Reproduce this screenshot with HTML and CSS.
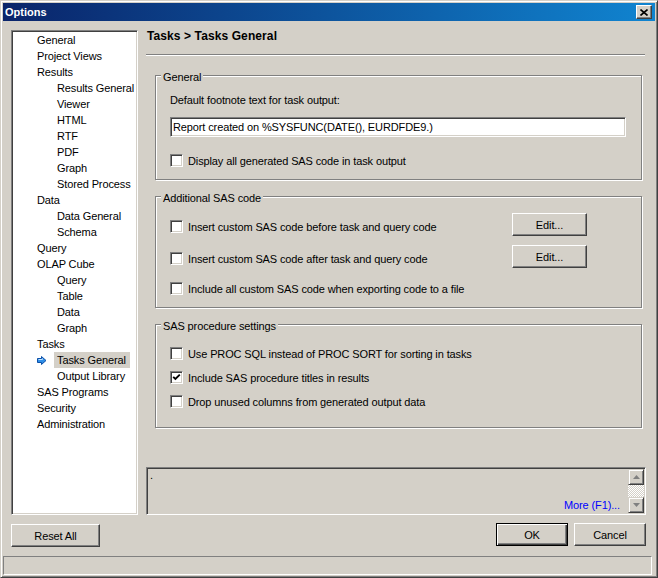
FILE: index.html
```html
<!DOCTYPE html>
<html>
<head>
<meta charset="utf-8">
<title>Options</title>
<link rel="stylesheet" href="styles.css">
</head>
<body>
<div class="window">
  <div class="titlebar">
    <span class="title">Options</span>
    <span class="close"><svg width="8" height="7" viewBox="0 0 8 7"><path d="M0.5 0.5 L7.5 6.5 M7.5 0.5 L0.5 6.5" stroke="#000" stroke-width="1.6"/></svg></span>
  </div>
  <div class="client">
    <div class="main">
      <div class="tree">
        <div class="node"><span>General</span></div>
        <div class="node"><span>Project Views</span></div>
        <div class="node"><span>Results</span></div>
        <div class="node sub"><span>Results General</span></div>
        <div class="node sub"><span>Viewer</span></div>
        <div class="node sub"><span>HTML</span></div>
        <div class="node sub"><span>RTF</span></div>
        <div class="node sub"><span>PDF</span></div>
        <div class="node sub"><span>Graph</span></div>
        <div class="node sub"><span>Stored Process</span></div>
        <div class="node"><span>Data</span></div>
        <div class="node sub"><span>Data General</span></div>
        <div class="node sub"><span>Schema</span></div>
        <div class="node"><span>Query</span></div>
        <div class="node"><span>OLAP Cube</span></div>
        <div class="node sub"><span>Query</span></div>
        <div class="node sub"><span>Table</span></div>
        <div class="node sub"><span>Data</span></div>
        <div class="node sub"><span>Graph</span></div>
        <div class="node"><span>Tasks</span></div>
        <div class="node sel"><svg class="arrow" width="10" height="9" viewBox="0 0 10 9"><path d="M0.5 2.5 H4.5 V0.5 L9 4.5 L4.5 8.5 V6.5 H0.5 Z" fill="#2f8fe8" stroke="#0b4fa8" stroke-width="1"/><path d="M1.5 3.5 H5.5 V2.5" fill="none" stroke="#bfe2ff" stroke-width="1"/></svg><span>Tasks General</span></div>
        <div class="node sub"><span>Output Library</span></div>
        <div class="node"><span>SAS Programs</span></div>
        <div class="node"><span>Security</span></div>
        <div class="node"><span>Administration</span></div>
      </div>
      <div class="pane">
        <div class="crumb">Tasks &gt; Tasks General</div>
        <div class="sep"></div>

        <div class="group g1">
          <div class="legend">General</div>
          <div class="field-label">Default footnote text for task output:</div>
          <div class="textbox">Report created on %SYSFUNC(DATE(), EURDFDE9.)</div>
          <div class="row first">
            <div class="check"><span class="box"></span><span>Display all generated SAS code in task output</span></div>
          </div>
        </div>

        <div class="group g2">
          <div class="legend">Additional SAS code</div>
          <div class="row first">
            <div class="check shift"><span class="box"></span><span>Insert custom SAS code before task and query code</span></div>
            <div class="btn edit">Edit...</div>
          </div>
          <div class="row">
            <div class="check shift"><span class="box"></span><span>Insert custom SAS code after task and query code</span></div>
            <div class="btn edit">Edit...</div>
          </div>
          <div class="row">
            <div class="check"><span class="box"></span><span>Include all custom SAS code when exporting code to a file</span></div>
          </div>
        </div>

        <div class="group g3">
          <div class="legend">SAS procedure settings</div>
          <div class="row first">
            <div class="check"><span class="box"></span><span>Use PROC SQL instead of PROC SORT for sorting in tasks</span></div>
          </div>
          <div class="row">
            <div class="check"><span class="box checked"><svg width="9" height="9" viewBox="0 0 9 9"><path d="M1.2 3.8 L3.4 6 L7.8 1.6" fill="none" stroke="#000" stroke-width="1.9"/></svg></span><span>Include SAS procedure titles in results</span></div>
          </div>
          <div class="row">
            <div class="check"><span class="box"></span><span>Drop unused columns from generated output data</span></div>
          </div>
        </div>

        <div class="help">
          <div class="help-text">
            <div class="dot">.</div>
            <div class="more">More (F1)...</div>
          </div>
          <div class="scrollbar">
            <div class="sbtn"><svg width="7" height="4" viewBox="0 0 7 4"><path d="M3.5 0 L7 4 H0 Z" fill="#808080"/></svg></div>
            <div class="track"></div>
            <div class="sbtn"><svg width="7" height="4" viewBox="0 0 7 4"><path d="M0 0 H7 L3.5 4 Z" fill="#808080"/></svg></div>
          </div>
        </div>
      </div>
    </div>
    <div class="buttons">
      <div class="btn reset">Reset All</div>
      <div class="btn ok">OK</div>
      <div class="btn cancel">Cancel</div>
    </div>
    <div class="status"></div>
  </div>
</div>
</body>
</html>
```

FILE: styles.css
```css
html, body {
  margin: 0;
  padding: 0;
  background: #d4d0c8;
}
body {
  font-family: "Liberation Sans", Arial, sans-serif;
  font-size: 11px;
  letter-spacing: -0.12px;
  color: #000;
}
.window {
  width: 658px;
  height: 578px;
  box-sizing: border-box;
  border: 1px solid;
  border-color: #d4d0c8 #404040 #404040 #d4d0c8;
  box-shadow: inset 1px 1px 0 #fff, inset -1px -1px 0 #808080;
  padding: 2px;
  background: #d4d0c8;
  display: flex;
  flex-direction: column;
}
.titlebar {
  height: 18px;
  flex: none;
  display: flex;
  align-items: center;
  padding-left: 2px;
  padding-right: 3px;
  background: linear-gradient(to right, #0a246a, #1084d0);
}
.title {
  color: #fff;
  font-weight: bold;
  font-size: 11px;
  letter-spacing: 0;
  flex: 1;
}
.close {
  width: 16px;
  height: 14px;
  box-sizing: border-box;
  border: 1px solid;
  border-color: #fff #404040 #404040 #fff;
  box-shadow: inset -1px -1px 0 #808080;
  background: #d4d0c8;
  display: flex;
  align-items: center;
  justify-content: center;
}
.close svg { display: block; }

.client {
  flex: 1;
  display: flex;
  flex-direction: column;
}
.main {
  display: flex;
  padding: 9px 9px 0 8px;
}
.tree {
  width: 127px;
  height: 485px;
  box-sizing: border-box;
  background: #fff;
  border: 1px solid;
  border-color: #808080 #fff #fff #808080;
  box-shadow: inset 1px 1px 0 #404040, inset -1px -1px 0 #d4d0c8;
  padding: 1px 0 0 22px;
}
.node {
  height: 16px;
  line-height: 16px;
  display: flex;
  align-items: center;
  white-space: nowrap;
}
.node span {
  padding: 0 3px;
}
.node.sub {
  padding-left: 20px;
}
.node.sel {
  margin-left: 3px;
}
.node.sel .arrow {
  display: block;
  margin-right: 7px;
}
.node.sel span {
  background: #d4d0c8;
  padding-right: 4px;
}

.pane {
  width: 500px;
  margin-left: 8px;
  height: 485px;
  display: flex;
  flex-direction: column;
}
.crumb {
  height: 24px;
  line-height: 13px;
  font-weight: bold;
  font-size: 12px;
  letter-spacing: 0.1px;
  padding-left: 1px;
  flex: none;
}
.sep {
  height: 0;
  border-top: 1px solid #808080;
  border-bottom: 1px solid #fff;
  margin-right: 1px;
  flex: none;
}
.group {
  flex: none;
  box-sizing: border-box;
  margin: 16px 4px 0 9px;
  border: 1px solid #808080;
  box-shadow: inset 1px 1px 0 #fff, 1px 1px 0 #fff;
  padding: 0 0 0 14px;
}
.g1 { margin-top: 19px; height: 105px; }
.g2 { height: 112px; }
.g3 { height: 104px; }
.legend {
  display: table;
  margin: -6px 0 0 -9px;
  padding: 0 2px;
  line-height: 14px;
  background: #d4d0c8;
}
.field-label {
  margin-top: 9px;
  line-height: 14px;
}
.textbox {
  margin-top: 10px;
  width: 456px;
  height: 20px;
  box-sizing: border-box;
  background: #fff;
  border: 1px solid;
  border-color: #808080 #fff #fff #808080;
  box-shadow: inset 1px 1px 0 #404040, inset -1px -1px 0 #d4d0c8;
  padding: 1px 2px;
  line-height: 16px;
  white-space: nowrap;
}
.row {
  height: 23px;
  display: flex;
  align-items: center;
}
.g1 .row.first { margin-top: 12px; }
.g2 .row { margin-top: 9px; }
.g2 .row.first { margin-top: 8px; }
.g3 .row { margin-top: 1px; }
.g3 .row.first { margin-top: 9px; }
.check {
  display: flex;
  align-items: center;
  line-height: 14px;
  white-space: nowrap;
}
.check.shift { margin-top: 4px; }
.box {
  width: 13px;
  height: 13px;
  box-sizing: border-box;
  background: #fff;
  border: 1px solid;
  border-color: #808080 #fff #fff #808080;
  box-shadow: inset 1px 1px 0 #404040, inset -1px -1px 0 #d4d0c8;
  margin-right: 5px;
  flex: none;
  padding: 1px;
}
.box svg { display: block; }

.btn {
  box-sizing: border-box;
  height: 23px;
  border: 1px solid;
  border-color: #fff #404040 #404040 #fff;
  box-shadow: inset -1px -1px 0 #808080;
  background: #d4d0c8;
  display: flex;
  align-items: center;
  justify-content: center;
  flex: none;
}
.edit {
  width: 75px;
  margin-left: auto;
  margin-right: 54px;
}

.help {
  margin-top: auto;
  height: 48px;
  box-sizing: border-box;
  border: 1px solid;
  border-color: #808080 #fff #fff #808080;
  box-shadow: inset 1px 1px 0 #404040, inset -1px -1px 0 #d4d0c8;
  padding: 1px;
  display: flex;
  flex: none;
}
.help-text {
  flex: 1;
  display: flex;
  flex-direction: column;
  justify-content: space-between;
  padding-left: 2px;
}
.dot { line-height: 13px; }
.more {
  color: #0000ff;
  align-self: flex-end;
  line-height: 13px;
  margin-right: 8px;
  margin-bottom: 1px;
}
.scrollbar {
  width: 16px;
  display: flex;
  flex-direction: column;
}
.sbtn {
  height: 16px;
  box-sizing: border-box;
  border: 1px solid;
  border-color: #d4d0c8 #404040 #404040 #d4d0c8;
  box-shadow: inset 1px 1px 0 #fff, inset -1px -1px 0 #808080;
  background: #d4d0c8;
  display: flex;
  align-items: center;
  justify-content: center;
  flex: none;
}
.sbtn svg { display: block; }
.track {
  flex: 1;
  background: repeating-conic-gradient(#fff 0 25%, #d4d0c8 0 50%) 0 0 / 2px 2px;
}

.buttons {
  display: flex;
  padding: 0 9px 0 8px;
  margin-top: 8px;
  height: 23px;
}
.reset {
  width: 89px;
  margin-top: 1px;
}
.ok {
  width: 72px;
  margin-left: auto;
  border: 1px solid #000;
  box-shadow: inset 1px 1px 0 #fff, inset -1px -1px 0 #404040, inset -2px -2px 0 #808080;
}
.cancel {
  width: 72px;
  margin-left: 6px;
}
.status {
  margin: 10px 3px 0 0;
  height: 19px;
  box-sizing: border-box;
  border: 1px solid;
  border-color: #808080 #fff #fff #808080;
}
```
